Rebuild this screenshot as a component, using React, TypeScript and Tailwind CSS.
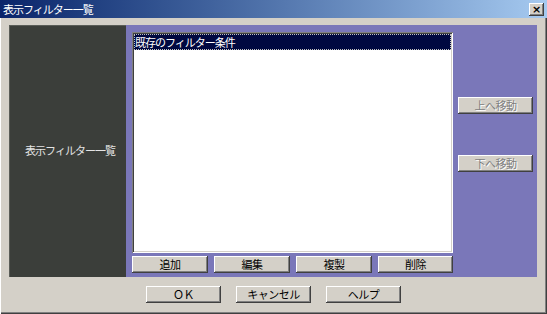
const font = "font-['MS_UI_Gothic','Noto_Sans_CJK_JP',sans-serif]";

const raised =
  'bg-[#d4d0c8] shadow-[inset_-1px_-1px_#404040,inset_1px_1px_#ffffff,inset_-2px_-2px_#808080,inset_2px_2px_#d4d0c8]';

function WinButton({ label, className, disabled }: { label: string; className: string; disabled?: boolean }) {
  return (
    <button
      type="button"
      className={`${raised} flex items-center justify-center text-[11px] leading-none tracking-[-0.5px] ${className} ${
        disabled ? 'text-[#808080] [text-shadow:1px_1px_0_#ffffff]' : 'text-black'
      }`}
    >
      {label}
    </button>
  );
}

export default function App() {
  return (
    <div
      className={`${font} flex h-[314px] w-[547px] flex-col bg-[#d4d0c8] shadow-[inset_1px_1px_#ffffff,inset_-1px_-1px_#404040,inset_-2px_-2px_#808080]`}
    >
      {/* title bar */}
      <div className="flex h-[18px] items-center justify-between bg-gradient-to-r from-[#0a246a] to-[#a6caf0] pl-[3px] pr-[3px]">
        <span className="text-[11px] leading-none tracking-[-1px] text-white">表示フィルター一覧</span>
        <div
          className={`${raised} flex h-[13px] w-[15px] items-center justify-center font-['DejaVu_Sans',sans-serif] text-[11px] font-bold leading-none text-black`}
        >
          ×
        </div>
      </div>

      {/* content */}
      <div className="ml-[9px] mt-[7px] flex h-[252px] w-[528px]">
        <div className="flex w-[117px] items-center justify-center bg-[#3b3e3a] pb-[2px] pl-[5px] shadow-[inset_1px_1px_#5a5d58]">
          <span className="text-[11px] tracking-[-1px] text-[#e4e4e4]">表示フィルター一覧</span>
        </div>

        <div className="flex flex-1 bg-[#7a77b9] pb-[4px] pl-[6px] pr-[4px] pt-[7px]">
          <div className="flex w-[321px] flex-col">
            <div className="h-[221px] bg-white p-[2px] shadow-[inset_1px_1px_#808080,inset_-1px_-1px_#ffffff,inset_2px_2px_#404040,inset_-2px_-2px_#d4d0c8]">
              <div className="flex h-[16px] items-center bg-[#000840] pl-[1px] text-[11px] leading-none tracking-[-1px] text-white outline-1 outline-dotted outline-offset-[-1px] outline-[#c0c0c0]">
                既存のフィルター条件
              </div>
            </div>
            <div className="mt-[3px] flex gap-[6px]">
              <WinButton label="追加" className="h-[17px] w-[76px]" />
              <WinButton label="編集" className="h-[17px] w-[76px]" />
              <WinButton label="複製" className="h-[17px] w-[76px]" />
              <WinButton label="削除" className="h-[17px] w-[75px]" />
            </div>
          </div>

          <div className="ml-[5px] flex w-[75px] flex-col pt-[65px]">
            <WinButton label="上へ移動" className="h-[17px] w-[75px]" disabled />
            <WinButton label="下へ移動" className="mt-[41px] h-[17px] w-[75px]" disabled />
          </div>
        </div>
      </div>

      {/* dialog buttons */}
      <div className="mt-[9px] flex justify-center gap-[15px]">
        <WinButton label="ＯＫ" className="h-[17px] w-[75px]" />
        <WinButton label="キャンセル" className="h-[17px] w-[75px]" />
        <WinButton label="ヘルプ" className="h-[17px] w-[75px]" />
      </div>
    </div>
  );
}
